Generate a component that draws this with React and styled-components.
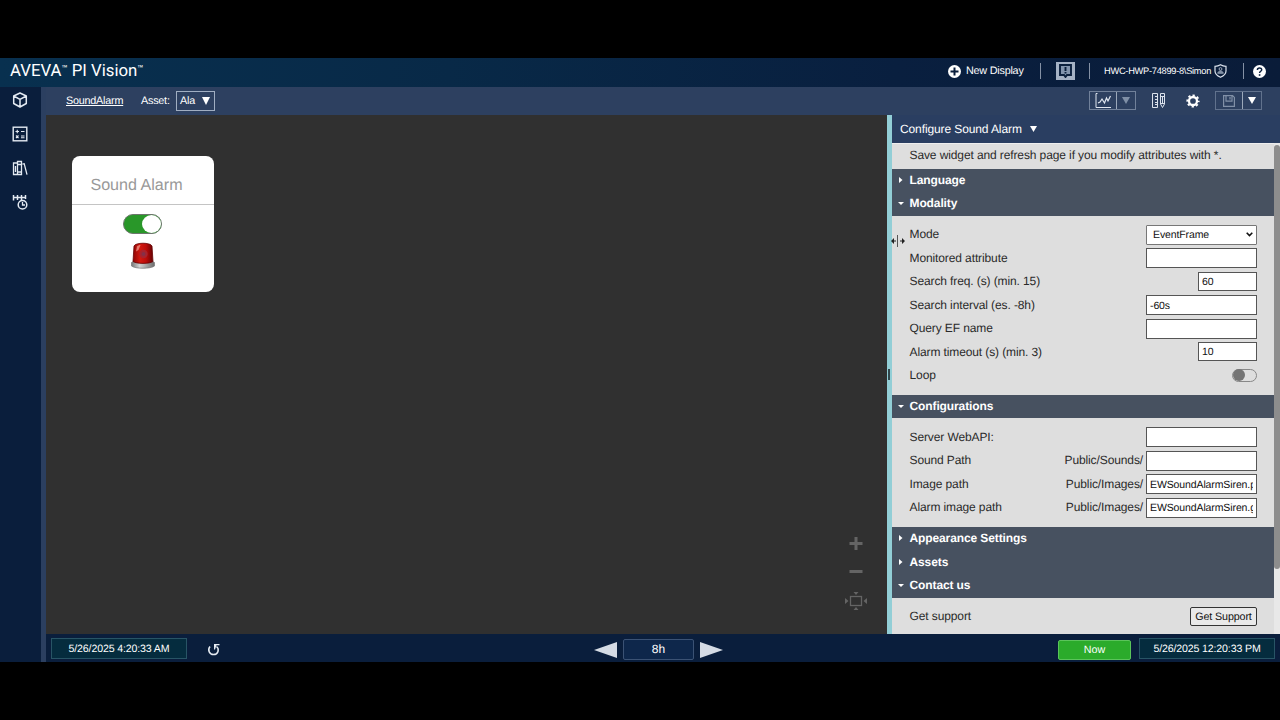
import React, { useState } from "react";
import styled, { createGlobalStyle } from "styled-components";

const GlobalStyle = createGlobalStyle`
  * {
    box-sizing: border-box;
  }

  body {
    margin: 0;
    background: #000;
    overflow: hidden;
    font-family: "Liberation Sans", Arial, sans-serif;
    text-rendering: geometricPrecision;
  }

  input, button {
    text-rendering: inherit;
    letter-spacing: inherit;
  }

  svg {
    display: block;
    flex: none;
  }
`;

const Page = styled.div`
  width: 1280px;
  height: 720px;
  padding: 58px 0;
  background: #000;
  display: flex;
  flex-direction: column;
  color: #fff;
`;

const Header = styled.header`
  height: 29px;
  display: flex;
  align-items: center;
  padding: 0 13px 3px 10px;
  background: linear-gradient(90deg, #08304f 0%, #082947 35%, #091f3f 70%, #0a1c39 100%);
`;

const Brand = styled.div`
  flex: 1;
  font-family: Roboto, sans-serif;
  font-size: 16.8px;
  line-height: 24px;
  padding-top: 3px;
  letter-spacing: -0.02px;
  white-space: nowrap;

  small {
    font-size: 10px;
    letter-spacing: 0;
    position: relative;
    top: -4px;
  }
`;

const NewDisplay = styled.div`
  display: flex;
  align-items: center;
  gap: 5px;
  font-size: 10.8px;
  letter-spacing: -0.22px;
  width: 92px;
  white-space: nowrap;
`;

const Divider = styled.div`
  width: 1px;
  height: 16px;
  background: #8491a5;
`;

const Notice = styled.div`
  width: 19px;
  height: 18px;
  margin: 0 14px 0 15px;
  background: #a5b2c5;
  display: grid;
  place-items: center;
`;

const User = styled.div`
  display: flex;
  align-items: center;
  gap: 3px;
  width: 139px;
  margin-left: 14px;
  font-size: 9.3px;
  letter-spacing: -0.29px;
  white-space: nowrap;
`;

const Main = styled.div`
  flex: 1;
  display: flex;
  min-height: 0;
`;

const Sidebar = styled.nav`
  width: 41px;
  background: #0a1e3c;
  display: flex;
  flex-direction: column;
  align-items: center;
  gap: 18px;
  padding: 5px 1px 0 0;
`;

const Workspace = styled.div`
  flex: 1;
  min-width: 0;
  display: flex;
  flex-direction: column;
  border-left: 5px solid #2b3f60;
`;

const Toolbar = styled.div`
  height: 28px;
  background: #2d4060;
  display: flex;
  align-items: center;
  padding: 0 18px 1px 20px;
  font-size: 10.8px;
  letter-spacing: -0.22px;
`;

const DisplayName = styled.span`
  text-decoration: underline;
  width: 75px;
`;

const AssetLabel = styled.span`
  width: 35px;
`;

const AssetSelect = styled.div`
  width: 39px;
  height: 20px;
  border: 1px solid #a0aec2;
  display: flex;
  align-items: center;
  justify-content: space-between;
  padding: 0 4px 0 3px;
  margin-right: auto;
`;

const SplitButton = styled.div`
  display: flex;
  height: 19px;
  border: 1px solid ${(props) => props.$line};
  width: ${(props) => props.$width}px;
`;

const SplitPart = styled.div`
  flex: 1;
  display: grid;
  place-items: center;

  & + & {
    flex: none;
    width: 19px;
    border-left: 1px solid ${(props) => props.$line || "#6d7e98"};
  }
`;

const ToolIcon = styled.div`
  width: ${(props) => props.$width}px;
  display: grid;
  place-items: center;
`;

const HelpIcon = styled.div`
  padding-left: 9px;
  margin-right: 1px;
`;

const Content = styled.div`
  height: 519px;
  display: flex;
`;

const Canvas = styled.div`
  width: 841px;
  background: #303030;
  position: relative;
`;

const AlarmCard = styled.div`
  position: absolute;
  left: 25.5px;
  top: 40.5px;
  width: 142px;
  height: 136px;
  background: #fff;
  border-radius: 8px;
  display: flex;
  flex-direction: column;
  align-items: center;
`;

const AlarmTitle = styled.div`
  width: 100%;
  height: 49px;
  border-bottom: 1px solid #c4c4c4;
  padding: 6px 12px 0 0;
  color: #999;
  font-size: 16.1px;
  line-height: 47px;
  text-align: center;
`;

const AlarmToggle = styled.button`
  width: 39px;
  height: 20px;
  margin: 9px 0 8px;
  padding: 0;
  border: 1px solid #6c756c;
  border-radius: 10px;
  background: ${(props) => (props.$on ? "#299729" : "#ddd")};
  display: flex;
  justify-content: ${(props) => (props.$on ? "flex-end" : "flex-start")};

  &::after {
    content: "";
    width: 19px;
    height: 18px;
    border-radius: 50%;
    background: #fff;
  }
`;

const ZoomControls = styled.div`
  position: absolute;
  right: 20px;
  top: 421px;
  display: flex;
  flex-direction: column;
  align-items: center;
  gap: 13px;
`;

const Splitter = styled.div`
  width: 5px;
  background: #92ced6;
  display: flex;
  align-items: center;
  padding-left: 1px;

  &::after {
    content: "";
    width: 2px;
    height: 11px;
    background: #30464c;
  }
`;

const ResizeCursor = styled.div`
  position: absolute;
  left: 891px;
  top: 235px;
`;

const Panel = styled.aside`
  flex: 1;
  display: flex;
  flex-direction: column;
  color: #2a2a2a;
  font-size: 12px;
  letter-spacing: -0.11px;
`;

const PanelTitle = styled.div`
  height: 28px;
  background: #2a3e61;
  color: #fff;
  display: flex;
  align-items: center;
  gap: 8px;
  padding: 0 0 1px 8px;
`;

const PanelScroll = styled.div`
  flex: 1;
  min-height: 0;
  display: flex;
  background: #e8e8e8;
`;

const PanelBody = styled.div`
  width: 382px;
  background: #dedede;
  overflow: hidden;
`;

const Scrollbar = styled.div`
  width: 6px;
  padding-top: 2px;

  &::after {
    content: "";
    display: block;
    height: 424px;
    background: #8d8d8d;
    border-radius: 3px;
  }
`;

const Hint = styled.div`
  height: 26px;
  line-height: 23px;
  padding-left: 17.5px;
  border-top: 1px solid #eee;
  white-space: nowrap;
`;

const SectionHead = styled.div`
  height: 23.4px;
  background: #475160;
  color: #fff;
  font-weight: bold;
  display: flex;
  align-items: center;
  padding: 0 0 1.8px 5px;

  svg {
    margin-right: 4.5px;
  }
`;

const SectionBody = styled.div`
  padding: 7.6px 17px 7.6px 17.5px;
`;

const Row = styled.div`
  height: 23.45px;
  display: flex;
  align-items: center;
  justify-content: space-between;
  white-space: nowrap;
`;

const Label = styled.span`
  padding-bottom: 1.5px;
`;

const Prefix = styled.span`
  padding-bottom: 1px;
`;

const Field = styled.div`
  display: flex;
  align-items: center;
  gap: 3px;
  margin-top: -0.6px;
`;

const TextInput = styled.input`
  width: ${(props) => (props.$small ? 59 : 111)}px;
  height: ${(props) => (props.$small ? 19 : 20)}px;
  border: 1px solid #555;
  background: #fff;
  color: #111;
  padding: 1px 3px 0;
  font-family: inherit;
  font-size: 10.5px;
  outline: none;
`;

const ModeSelect = styled.div`
  width: 111px;
  height: 20px;
  border: 1px solid #777;
  border-radius: 1px;
  background: #fff;
  color: #111;
  font-size: 10.5px;
  display: flex;
  align-items: center;
  justify-content: space-between;
  padding: 0 3px 0 6px;
`;

const LoopToggle = styled.div`
  width: 25px;
  height: 13px;
  border: 1px solid #888;
  border-radius: 7px;
  display: flex;
  align-items: center;

  &::after {
    content: "";
    width: 12px;
    height: 12px;
    border-radius: 50%;
    background: #747474;
  }
`;

const SupportButton = styled.button`
  width: 67px;
  height: 19px;
  padding: 0;
  border: 1px solid #333;
  border-radius: 2px;
  background: #e9e9e9;
  color: #111;
  font-family: inherit;
  font-size: 10.7px;
`;

const TimeBar = styled.footer`
  height: 28px;
  background: #0a1e3c;
  display: flex;
  align-items: flex-start;
  padding: 4px 5px 0;
  font-size: 11px;
`;

const TimeBox = styled.div`
  width: 136px;
  height: 21px;
  border: 1px solid #285465;
  background: #052c3e;
  line-height: 20px;
  text-align: center;
  font-size: 10.6px;
  letter-spacing: -0.14px;
`;

const Revert = styled.div`
  padding: 5px 0 0 20px;
  width: 407px;
`;

const Range = styled.div`
  display: flex;
  align-items: center;
  gap: 6px;
  margin-top: 1px;
  flex: 1;
`;

const RangeBox = styled.div`
  width: 71px;
  height: 21px;
  border: 1px solid #3b5274;
  border-radius: 2px;
  background: #0e274b;
  text-align: center;
  font-size: 12px;
  line-height: 19px;
`;

const NowButton = styled.button`
  width: 73px;
  height: 20px;
  margin: 2px 8px 0 0;
  padding: 0;
  border: 1px solid #5bc45b;
  border-radius: 2px;
  background: #2bab2b;
  color: #fff;
  font-family: inherit;
  font-size: 10.7px;
`;

const Down = ({ width = 8, height = 7, color = "#fff" }) => (
  <svg width={width} height={height} viewBox="0 0 8 7" preserveAspectRatio="none">
    <path d="M0 0h8L4 7z" fill={color} />
  </svg>
);

const Marker = ({ open }) => (
  <svg width="8" height="8" viewBox="0 0 8 8" fill="#fff">
    {open ? <path d="M1 3h6L4 6z" /> : <path d="M2 1l3.5 3L2 7z" />}
  </svg>
);

const Siren = () => (
  <svg width="26" height="28" viewBox="0 0 26 28">
    <defs>
      <linearGradient id="glass" x1="0" x2="1">
        <stop offset="0" stopColor="#8e0505" />
        <stop offset=".35" stopColor="#d21a10" />
        <stop offset=".65" stopColor="#bd0c0a" />
        <stop offset="1" stopColor="#650304" />
      </linearGradient>
      <linearGradient id="base" x1="0" x2="1">
        <stop offset="0" stopColor="#777" />
        <stop offset=".35" stopColor="#d2d2d2" />
        <stop offset="1" stopColor="#6d6d6d" />
      </linearGradient>
    </defs>
    <path d="M1.500 20.500C4 17.500 22 17.500 24.500 20.500V24C21 27 5 27 1.500 24z" fill="url(#base)" stroke="#777" strokeWidth=".7" />
    <path d="M4 4C5.500 .3 20.500 .3 22 4L23 19.500C20 22 6 22 3 19.500z" fill="url(#glass)" stroke="#600" strokeWidth=".8" />
    <circle cx="13.500" cy="12" r="4.200" fill="#a9232d" />
    <circle cx="13.500" cy="12" r="2" fill="#853047" />
    <path d="M6 9.500L7 4.500C7.500 3.500 9.500 3 10.500 3L8.500 8z" fill="#f09486" opacity=".8" />
  </svg>
);

const Section = ({ title, open, children }) => (
  <>
    <SectionHead>
      <Marker open={open} />
      {title}
    </SectionHead>
    {open && children && <SectionBody>{children}</SectionBody>}
  </>
);

const SettingRow = ({ label, prefix, children }) => (
  <Row>
    <Label>{label}</Label>
    <Field>
      {prefix && <Prefix>{prefix}</Prefix>}
      {children}
    </Field>
  </Row>
);

const App = () => {
  const [on, setOn] = useState(true);

  return (
    <Page>
      <GlobalStyle />
      <Header>
        <Brand>
          AVEVA<small>™</small> PI Vision<small>™</small>
        </Brand>
        <NewDisplay>
          <svg width="13" height="13" viewBox="0 0 13 13">
            <circle cx="6.5" cy="6.5" r="6.5" fill="#fff" />
            <path d="M6.500 2.500v8M2.500 6.500h8" stroke="#0a1e3c" strokeWidth="2" />
          </svg>
          New Display
        </NewDisplay>
        <Divider />
        <Notice>
          <svg width="13" height="14" viewBox="0 0 13 14">
            <path d="M1 1h11v10H8l-1.500 2L5 11H1z" fill="#8294ad" stroke="#0b203d" strokeWidth="1.900" />
            <path d="M6.500 3v4M6.500 8v1.600" stroke="#0b203d" strokeWidth="1.900" />
          </svg>
        </Notice>
        <Divider />
        <User>
          HWC-HWP-74899-8\Simon
          <svg width="13" height="14" viewBox="0 0 13 14" fill="none" stroke="#dce3ed">
            <path d="M6.500 .8C8.500 2 10.500 2.300 12 2.300V7c0 3-2.500 5-5.500 6.300C3.500 12 1 10 1 7V2.300C2.500 2.300 4.500 2 6.500 .8z" strokeWidth="1.200" />
            <circle cx="6.500" cy="5" r="1.400" stroke="#9ba7b9" />
            <path d="M3.700 9.300c.4-3 5.200-3 5.600 0z" fill="#7e8ba1" stroke="#9ba7b9" strokeWidth=".8" />
          </svg>
        </User>
        <Divider />
        <HelpIcon>
          <svg width="13" height="13" viewBox="0 0 13 13">
            <circle cx="6.500" cy="6.500" r="6.500" fill="#fff" />
            <path d="M4.400 5C4.400 2.200 8.700 2.300 8.700 4.800 8.700 6.300 6.600 6.200 6.600 8" fill="none" stroke="#0a1e3c" strokeWidth="1.500" />
            <path d="M5.800 9.200h1.600v1.600H5.800z" fill="#0a1e3c" />
          </svg>
        </HelpIcon>
      </Header>

      <Main>
        <Sidebar>
          <svg width="16" height="16" viewBox="0 0 16 16" fill="none" stroke="#e4eaf2" strokeWidth="1.500" strokeLinejoin="round">
            <path d="M8 1l6.300 3v7.500L8 15l-6.300-3.500V4zM1.700 4L8 7.300 14.300 4M8 7.300V15" />
          </svg>
          <svg width="16" height="16" viewBox="0 0 16 16" fill="none" stroke="#e4eaf2">
            <rect x="1.200" y="1.200" width="13.600" height="13.600" strokeWidth="1.400" />
            <path d="M3.500 5.500h3.500M5.250 3.800v3.400M9 5.500h3.500M4 9.500l2.500 2.500M6.500 9.500L4 12M9 10h3.500M9 11.800h3.500" strokeWidth="1.100" />
          </svg>
          <svg width="16" height="16" viewBox="0 0 16 16" fill="none" stroke="#e4eaf2" strokeWidth="1.300">
            <path d="M1.500 3h4v11.500h-4zM5.500 1.500h4v13h-4zM10.500 4.200l1.700-.5 2.800 11M5.500 4.500h4M5.500 12h4M3.500 6v6" />
          </svg>
          <svg width="16" height="16" viewBox="0 0 16 16" fill="none" stroke="#e4eaf2" strokeWidth="1.500">
            <path d="M1.500 1v5.500M5.500 1v5M9.500 1v5M13.500 1v4M1.500 3.500h12" />
            <circle cx="10.500" cy="10.700" r="4.300" fill="#0a1e3c" />
            <path d="M10.500 8v3H13" strokeWidth="1.300" />
          </svg>
        </Sidebar>

        <Workspace>
          <Toolbar>
            <DisplayName>SoundAlarm</DisplayName>
            <AssetLabel>Asset:</AssetLabel>
            <AssetSelect>
              Ala
              <Down width={8} height={8} />
            </AssetSelect>
            <SplitButton $width={47} $line="#71819a">
              <SplitPart>
                <svg width="17" height="15" viewBox="0 0 17 15" fill="none" stroke="#e1e7f0">
                  <path d="M2.500 .5H1v14h15" />
                  <path d="M3 10l2-1 2-3 2.500 4 2-5 1.500 3 2.500-5" strokeWidth="1.200" />
                </svg>
              </SplitPart>
              <SplitPart>
                <Down color="#8090a7" />
              </SplitPart>
            </SplitButton>
            <ToolIcon $width={44}>
              <svg width="15" height="17" viewBox="0 0 15 17" fill="none" stroke="#dbe2ec">
                <path d="M1.500 1.500h5v14h-5zM4 4.500h2.500M4 7.500h2.500M4 10.500h2.500M4 12.500h2.500" />
                <path d="M9.500 1.500h4v10.500l-2 3.500-2-3.500zM9.500 4.500h4M9.500 11.500h4M11.500 5v6" />
              </svg>
            </ToolIcon>
            <ToolIcon $width={26}>
              <svg width="14" height="14" viewBox="0 0 14 14" fill="none" stroke="#fff">
                <circle cx="7" cy="7" r="4" strokeWidth="2.300" />
                <circle cx="7" cy="7" r="5.700" strokeWidth="1.800" strokeDasharray="2.300 2.177" strokeDashoffset="1.150" />
              </svg>
            </ToolIcon>
            <ToolIcon $width={9} />
            <SplitButton $width={47} $line="#61728d">
              <SplitPart>
                <svg width="12" height="12" viewBox="0 0 12 12" fill="none" stroke="#8190a7" strokeWidth="1.200">
                  <path d="M.6 .6h9l1.800 1.800v9H.6zM3 .6v5.600h6V.6M7 2v2.500" />
                </svg>
              </SplitPart>
              <SplitPart $line="#9ba8ba">
                <Down />
              </SplitPart>
            </SplitButton>
          </Toolbar>

          <Content>
            <Canvas>
              <AlarmCard>
                <AlarmTitle>Sound Alarm</AlarmTitle>
                <AlarmToggle $on={on} onClick={() => setOn(!on)} />
                <Siren />
              </AlarmCard>
              <ZoomControls>
                <svg width="14" height="15" viewBox="0 0 14 15" stroke="#646464" strokeWidth="3">
                  <path d="M7 1v13M.5 7.500h13" />
                </svg>
                <svg width="14" height="15" viewBox="0 0 14 15" stroke="#646464" strokeWidth="3">
                  <path d="M.5 7.500h13" />
                </svg>
                <svg width="22" height="19" viewBox="0 0 22 19" fill="#646464">
                  <rect x="5.500" y="4.500" width="11" height="9" fill="none" stroke="#646464" strokeWidth="1.300" />
                  <path d="M8.500 0h5L11 3zM8.500 18h5L11 15zM0 6v6l3.500-3zM22 6v6l-3.500-3z" />
                </svg>
              </ZoomControls>
            </Canvas>
            <Splitter />
            <Panel>
              <PanelTitle>
                Configure Sound Alarm
                <Down width={7} height={6} />
              </PanelTitle>
              <PanelScroll>
                <PanelBody>
                  <Hint>Save widget and refresh page if you modify attributes with *.</Hint>
                  <Section title="Language" />
                  <Section title="Modality" open>
                    <SettingRow label="Mode">
                      <ModeSelect>
                        EventFrame
                        <svg width="7" height="5" viewBox="0 0 7 5" fill="none" stroke="#111" strokeWidth="1.600">
                          <path d="M.7 .8l2.800 2.800L6.300 .8" />
                        </svg>
                      </ModeSelect>
                    </SettingRow>
                    <SettingRow label="Monitored attribute">
                      <TextInput />
                    </SettingRow>
                    <SettingRow label="Search freq. (s) (min. 15)">
                      <TextInput $small defaultValue="60" />
                    </SettingRow>
                    <SettingRow label="Search interval (es. -8h)">
                      <TextInput defaultValue="-60s" />
                    </SettingRow>
                    <SettingRow label="Query EF name">
                      <TextInput />
                    </SettingRow>
                    <SettingRow label="Alarm timeout (s) (min. 3)">
                      <TextInput $small defaultValue="10" />
                    </SettingRow>
                    <SettingRow label="Loop">
                      <LoopToggle />
                    </SettingRow>
                  </Section>
                  <Section title="Configurations" open>
                    <SettingRow label="Server WebAPI:">
                      <TextInput />
                    </SettingRow>
                    <SettingRow label="Sound Path" prefix="Public/Sounds/">
                      <TextInput />
                    </SettingRow>
                    <SettingRow label="Image path" prefix="Public/Images/">
                      <TextInput defaultValue="EWSoundAlarmSiren.png" />
                    </SettingRow>
                    <SettingRow label="Alarm image path" prefix="Public/Images/">
                      <TextInput defaultValue="EWSoundAlarmSiren.gif" />
                    </SettingRow>
                  </Section>
                  <Section title="Appearance Settings" />
                  <Section title="Assets" />
                  <Section title="Contact us" open>
                    <SettingRow label="Get support">
                      <SupportButton>Get Support</SupportButton>
                    </SettingRow>
                  </Section>
                </PanelBody>
                <Scrollbar />
              </PanelScroll>
            </Panel>
          </Content>

          <TimeBar>
            <TimeBox>5/26/2025 4:20:33 AM</TimeBox>
            <Revert>
              <svg width="14" height="13" viewBox="0 0 14 13" fill="none" stroke="#e6ecf3" strokeWidth="1.500">
                <path d="M3 3.500C.2 7 2.500 11.500 6.500 11.500c5 0 6-5.500 3-8" />
                <path d="M7 1h5.500v1.200H9.500L8 6.500H7z" fill="#e6ecf3" stroke="none" />
              </svg>
            </Revert>
            <Range>
              <svg width="23" height="16" viewBox="0 0 23 16">
                <path d="M0 8L23 0v16z" fill="#d5dbe4" />
              </svg>
              <RangeBox>8h</RangeBox>
              <svg width="23" height="16" viewBox="0 0 23 16">
                <path d="M23 8L0 0v16z" fill="#d5dbe4" />
              </svg>
            </Range>
            <NowButton>Now</NowButton>
            <TimeBox>5/26/2025 12:20:33 PM</TimeBox>
          </TimeBar>
        </Workspace>
      </Main>

      <ResizeCursor>
        <svg width="14" height="12" viewBox="0 0 14 12" fill="#222" stroke="#222">
          <path d="M6.500 0v12" strokeWidth="1" stroke="#555" />
          <path d="M2 6h3M9 6h3" />
          <path d="M0 6l3-3v6zM14 6l-3-3v6z" stroke="none" />
        </svg>
      </ResizeCursor>
    </Page>
  );
};

export default App;
